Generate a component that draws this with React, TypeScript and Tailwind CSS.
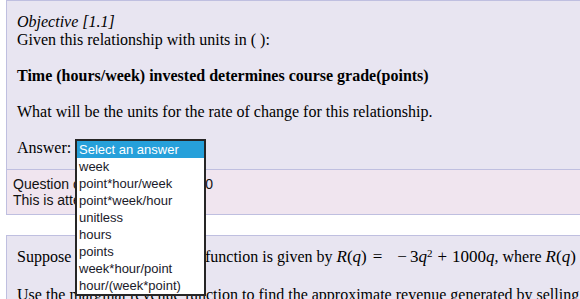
import React from "react";

const serif = { fontFamily: '"Liberation Serif", "Times New Roman", serif' };

export default function App() {
  const options = [
    "week",
    "point*hour/week",
    "point*week/hour",
    "unitless",
    "hours",
    "points",
    "week*hour/point",
    "hour/(week*point)",
  ];
  return (
    <div className="relative w-[580px] h-[299px] overflow-hidden bg-white text-black">
      <div className="ml-[6px] w-[640px] border border-[#bfbfe0]">
        <div
          className="bg-[#e8e5f1] pl-[10px] pt-[12px] pb-[12px] text-[16px] leading-[18px]"
          style={serif}
        >
          <div className="italic">Objective [1.1]</div>
          <div>Given this relationship with units in ( ):</div>
          <div className="mt-[18px] font-bold">
            Time (hours/week) invested determines course grade(points)
          </div>
          <div className="mt-[18px]">
            What will be the units for the rate of change for this relationship.
          </div>
          <div className="mt-[18px]">Answer:</div>
        </div>
        <div
          className="border-t border-[#bfbfe0] bg-[#f0e5ef] pl-[6px] pt-[6px] pb-[6px] text-[14px] leading-[16px] text-[#111]"
          style={{ fontFamily: '"Liberation Sans", Arial, sans-serif' }}
        >
          <div>Question contents. All points: 10</div>
          <div>This is attempt 1 of 3.</div>
        </div>
      </div>

      <div
        className="ml-[6px] mt-[20px] w-[640px] border border-[#bfbfe0] bg-[#e8e5f1] pl-[10px] pt-[12px] pb-[12px] text-[16px] leading-[18px]"
        style={serif}
      >
        <div className="whitespace-nowrap">
          Suppose now a total revenue function is given by{" "}
          <span className="text-[17px]">
            <span className="italic">R</span>(<span className="italic">q</span>)
            <span className="mx-[6px]">=</span>
            <span className="ml-[9px]">−</span>
            <span className="ml-[3px]">3</span>
            <span className="italic">q</span>
            <sup className="text-[11px]">2</sup>
            <span className="mx-[5px]">+</span>
            1000<span className="italic">q</span>
          </span>
          , where{" "}
          <span className="text-[17px]">
            <span className="italic">R</span>(<span className="italic">q</span>)
          </span>
        </div>
        <div className="mt-[20px] whitespace-nowrap">
          Use the marginal revenue function to find the approximate revenue generated by selling
        </div>
      </div>

      <div
        className="absolute left-[75px] top-[139px] w-[131px] border-2 border-[#262626] bg-white text-[13px] leading-[17px] text-[#1a1a2a]"
        style={{ fontFamily: '"Liberation Sans", Arial, sans-serif' }}
      >
        <div className="bg-[#26a0da] pl-[2px] text-white">Select an answer</div>
        {options.map((o) => (
          <div key={o} className="pl-[2px]">
            {o}
          </div>
        ))}
      </div>
    </div>
  );
}
